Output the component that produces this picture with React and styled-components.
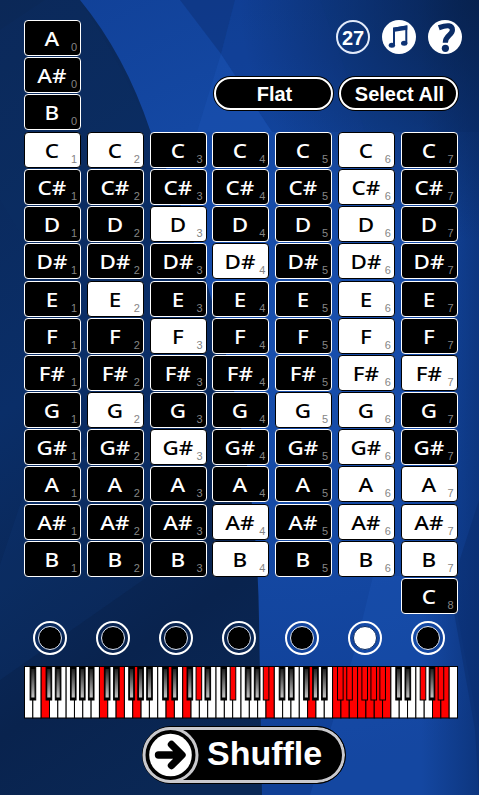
import styled, { createGlobalStyle } from "styled-components";

const GlobalStyle = createGlobalStyle`
  * {
    box-sizing: border-box;
  }
  body {
    margin: 0;
    background: #0b2a5e;
  }
`;
const Screen = styled.div`
  position: relative;
  width: 479px;
  height: 795px;
  padding: 20px 21px 0 24px;
  overflow: hidden;
  font-family: "Liberation Sans", Arial, sans-serif;
`;
const Backdrop = styled.svg`
  position: absolute;
  inset: 0;
  z-index: -1;
`;
const TopArea = styled.div`
  display: flex;
  justify-content: space-between;
  height: 112px;
`;
const TopKeys = styled.div`
  display: flex;
  flex-direction: column;
`;
const Actions = styled.div`
  display: flex;
  flex-direction: column;
  align-items: flex-end;
`;
const IconRow = styled.div`
  display: flex;
  gap: 12px;
  margin-right: -4px;
`;
const Count = styled.div`
  width: 34px;
  height: 34px;
  border: 2px solid #e3ebfa;
  border-radius: 50%;
  color: #fff;
  font-size: 20px;
  font-weight: 700;
  line-height: 32px;
  text-align: center;
`;
const PillRow = styled.div`
  display: flex;
  gap: 6px;
  margin-top: 23px;
`;
const Pill = styled.button`
  width: 119px;
  height: 33px;
  padding: 0 0 0 2px;
  border: 2px solid #fff;
  border-radius: 17px;
  background: #000;
  box-shadow: 0 0 0 1px #000;
  color: #fff;
  font: 700 20px/28px "Liberation Sans", Arial, sans-serif;
  white-space: nowrap;
`;
const Grid = styled.div`
  display: flex;
  gap: 5.75px;
  height: 483px;
`;
const Column = styled.div`
  display: flex;
  flex-direction: column;
`;
const NoteKey = styled.div`
  position: relative;
  flex: none;
  width: 57px;
  height: 36px;
  margin-bottom: 1.17px;
  border: 1px solid ${(p) => (p.$on ? "#000" : "#fff")};
  border-radius: 4px;
  background: ${(p) => (p.$on ? "#fff" : "#000")};
  color: ${(p) => (p.$on ? "#000" : "#fff")};
  text-align: center;
`;
const NoteName = styled.span`
  display: block;
  padding-right: 1px;
  font: 500 20px/35px "Noto Sans", sans-serif;
  transform: scaleX(1.12);
`;
const Octave = styled.span`
  position: absolute;
  right: 3px;
  bottom: 2px;
  color: #858585;
  font: 11px/12px "Liberation Sans", Arial, sans-serif;
`;
const Radios = styled.div`
  display: flex;
  justify-content: space-between;
  margin: 6px 13.5px 0 8.5px;
`;
const Radio = styled.div`
  display: grid;
  place-items: center;
  width: 34px;
  height: 34px;
  border: 2px solid #fff;
  border-radius: 50%;
`;
const RadioDot = styled.div`
  width: 24px;
  height: 24px;
  border: 1px solid ${(p) => (p.$on ? "#0a2a60" : "#dfe8f8")};
  border-radius: 50%;
  background: ${(p) => (p.$on ? "#fff" : "#000")};
`;
const Piano = styled.svg`
  display: block;
  margin-top: 11px;
`;
const Shuffle = styled.button`
  display: flex;
  align-items: center;
  width: 204px;
  height: 58px;
  margin: 7px 0 0 118px;
  padding: 0;
  border: 1px solid #000;
  border-radius: 29px;
  background: #000;
  box-shadow: inset 0 0 0 3px #c9c9cd;
  color: #fff;
  font: 700 34px/54px "Liberation Sans", Arial, sans-serif;
`;
const ShuffleIcon = styled.svg`
  flex: none;
  margin: 0 8px 0 -1px;
`;
const ShuffleLabel = styled.span`
  padding-bottom: 4px;
`;

const NAMES = ["C", "C#", "D", "D#", "E", "F", "F#", "G", "G#", "A", "A#", "B"];
const SELECTED = {
  1: ["C"],
  2: ["C", "E", "G"],
  3: ["D", "F", "G#"],
  4: ["D#", "A#", "B"],
  5: ["G"],
  6: NAMES,
  7: ["F#", "A", "A#", "B"],
};
const OCTAVES = [1, 2, 3, 4, 5, 6, 7];
const isOn = (name, octave) => (SELECTED[octave] || []).includes(name);

const ALL_NOTES = [
  ["A", 0],
  ["A#", 0],
  ["B", 0],
  ...OCTAVES.flatMap((o) => NAMES.map((n) => [n, o])),
  ["C", 8],
];
const KEY_WIDTH = 433 / 52;
const NUDGE = { "C#": -0.4, "D#": 0.5, "F#": -1, "G#": -0.3, "A#": 0.3 };

const whiteKeys = [];
const blackKeys = [];
ALL_NOTES.forEach(([name, octave]) => {
  const on = isOn(name, octave);
  const x = 0.5 + whiteKeys.length * KEY_WIDTH;
  if (name.includes("#")) {
    blackKeys.push({ id: name + octave, x: x - 3 + NUDGE[name], on });
  } else {
    whiteKeys.push({ id: name + octave, x, on });
  }
});

const Note = ({ name, octave }) => (
  <NoteKey $on={isOn(name, octave)}>
    <NoteName>{name}</NoteName>
    <Octave>{octave}</Octave>
  </NoteKey>
);

const Background = () => (
  <Backdrop width="479" height="795" viewBox="0 0 479 795">
    <defs>
      <linearGradient id="navy" x1="0" y1="0" x2="0.4" y2="1">
        <stop offset="0" stopColor="#0b2857" />
        <stop offset="0.45" stopColor="#0a2e68" />
        <stop offset="0.8" stopColor="#09234e" />
        <stop offset="1" stopColor="#0a2856" />
      </linearGradient>
      <radialGradient id="blue" gradientUnits="userSpaceOnUse" cx="290" cy="330" r="450">
        <stop offset="0" stopColor="#184fae" />
        <stop offset="0.5" stopColor="#1448a3" />
        <stop offset="1" stopColor="#103f95" />
      </radialGradient>
      <radialGradient id="corner" gradientUnits="userSpaceOnUse" cx="479" cy="0" r="240">
        <stop offset="0" stopColor="#07204a" stopOpacity="0.9" />
        <stop offset="1" stopColor="#07204a" stopOpacity="0" />
      </radialGradient>
      <linearGradient id="edge">
        <stop offset="0.88" stopColor="#082a68" stopOpacity="0" />
        <stop offset="1" stopColor="#082a68" stopOpacity="0.6" />
      </linearGradient>
    </defs>
    <rect width="479" height="795" fill="url(#navy)" />
    <path d="M0 30L45 0H80Q125 70 150 130L24 240L0 200z" fill="#0c2d62" opacity="0.3" />
    <path d="M0 565L25 490L150 400V575L0 680z" fill="#113b7c" opacity="0.2" />
    <path d="M80 0Q125 55 150 130Q256 370 259 620L262 795H479V0z" fill="url(#blue)" />
    <path d="M180 0L221 54L235 0z" fill="#0c3178" opacity="0.55" />
    <path d="M235 0L221 54L272 132H365Q345 65 320 0z" fill="#0c3585" opacity="0.3" />
    <path d="M221 54L197 132H272z" fill="#1c57b8" opacity="0.35" />
    <path d="M320 0Q345 65 365 132H479V0z" fill="#0b347f" opacity="0.3" />
    <path d="M373 576L355 650L310 795H479V730L450 576z" fill="#1d55b6" opacity="0.35" />
    <path d="M450 590L475 730L479 795V500z" fill="#0a2d6c" opacity="0.45" />
    <rect width="479" height="795" fill="url(#edge)" />
    <rect width="479" height="795" fill="url(#corner)" />
  </Backdrop>
);

const MusicIcon = () => (
  <svg width="34" height="34" viewBox="0 0 34 34">
    <circle cx="17" cy="17" r="17" fill="#fff" />
    <path d="M12 25.5V8.5L24.3 6.5V23.5" fill="none" stroke="#0e3375" strokeWidth="2" />
    <path d="M11 7.7L25.3 5.4V9.7L11 12z" fill="#0e3375" />
    <ellipse cx="9.9" cy="25.3" rx="3.2" ry="2.5" fill="#0e3375" />
    <ellipse cx="22.2" cy="23.2" rx="3.2" ry="2.5" fill="#0e3375" />
  </svg>
);

const HelpIcon = () => (
  <svg width="34" height="34" viewBox="0 0 34 34">
    <circle cx="17" cy="17" r="17" fill="#fff" />
    <path
      d="M10.8 7.8Q24.4 2.8 24.4 10C24.4 15.2 17.3 15 17.3 22.8"
      fill="none"
      stroke="#0b2c66"
      strokeWidth="5.2"
    />
    <circle cx="17.4" cy="28.3" r="3.6" fill="#0b2c66" />
  </svg>
);

const Keyboard = () => (
  <Piano width="434" height="53" viewBox="0 0 434 53">
    <defs>
      <linearGradient id="ebony" x1="0" y1="0" x2="0" y2="1">
        <stop offset="0" stopColor="#222" />
        <stop offset="1" stopColor="#c4c4c4" />
      </linearGradient>
    </defs>
    {whiteKeys.map((k) => (
      <rect
        key={k.id}
        x={k.x}
        y="0.5"
        width={KEY_WIDTH}
        height="51.5"
        fill={k.on ? "#f00" : "#fff"}
        stroke="#000"
      />
    ))}
    {blackKeys.map((k) => (
      <g key={k.id}>
        <rect
          x={k.x}
          y="0.5"
          width="5.6"
          height="33.5"
          fill={k.on ? "#f00" : "#000"}
          stroke="#000"
        />
        {!k.on && <rect x={k.x + 1.2} y="3" width="3.2" height="28.5" fill="url(#ebony)" />}
      </g>
    ))}
  </Piano>
);

const App = () => {
  return (
    <>
      <GlobalStyle />
      <Screen>
        <Background />
        <TopArea>
          <TopKeys>
            <Note name="A" octave={0} />
            <Note name="A#" octave={0} />
            <Note name="B" octave={0} />
          </TopKeys>
          <Actions>
            <IconRow>
              <Count>27</Count>
              <MusicIcon />
              <HelpIcon />
            </IconRow>
            <PillRow>
              <Pill>Flat</Pill>
              <Pill>Select All</Pill>
            </PillRow>
          </Actions>
        </TopArea>
        <Grid>
          {OCTAVES.map((octave) => (
            <Column key={octave}>
              {NAMES.map((name) => (
                <Note key={name} name={name} octave={octave} />
              ))}
              {octave === 7 && <Note name="C" octave={8} />}
            </Column>
          ))}
        </Grid>
        <Radios>
          {OCTAVES.map((octave) => (
            <Radio key={octave}>
              <RadioDot $on={octave === 6} />
            </Radio>
          ))}
        </Radios>
        <Keyboard />
        <Shuffle>
          <ShuffleIcon width="57" height="58" viewBox="0 0 57 58">
            <circle cx="28.5" cy="29" r="26.5" fill="#000" stroke="#c9c9cd" strokeWidth="3" />
            <circle cx="28.5" cy="29" r="21.3" fill="#fff" />
            <path
              d="M16.5 29H39M29.5 18.5L40 29L29.5 39.5"
              fill="none"
              stroke="#000"
              strokeWidth="7.4"
              strokeLinecap="round"
              strokeLinejoin="round"
            />
          </ShuffleIcon>
          <ShuffleLabel>Shuffle</ShuffleLabel>
        </Shuffle>
      </Screen>
    </>
  );
};

export default App;
